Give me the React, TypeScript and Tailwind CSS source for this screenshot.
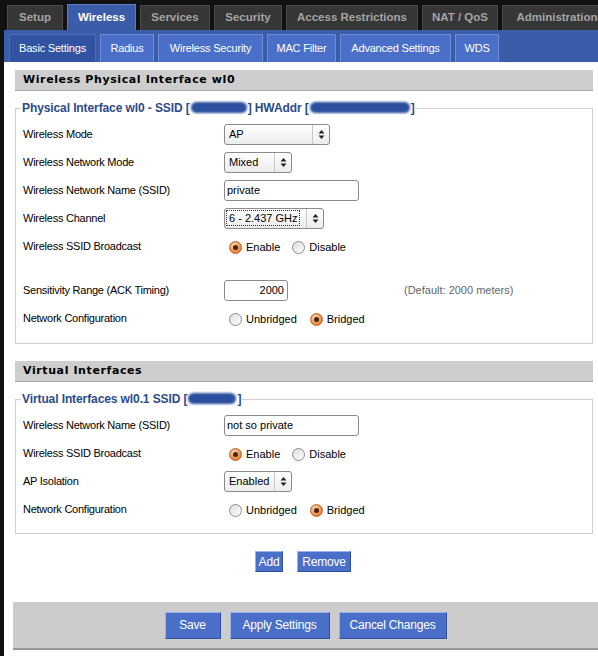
import React from 'react';

const sans = "font-['Liberation_Sans',Arial,sans-serif]";

const topTabs = [
  { label: 'Setup', w: 'w-[56px]' },
  { label: 'Wireless', w: 'w-[69px]', active: true },
  { label: 'Services', w: 'w-[70px]' },
  { label: 'Security', w: 'w-[68px]' },
  { label: 'Access Restrictions', w: 'w-[132px]' },
  { label: 'NAT / QoS', w: 'w-[76px]' },
  { label: 'Administration', w: 'w-[110px]' },
];

const subTabs = [
  { label: 'Basic Settings', w: 'w-[87px]', active: true },
  { label: 'Radius', w: 'w-[54px]' },
  { label: 'Wireless Security', w: 'w-[105px]' },
  { label: 'MAC Filter', w: 'w-[69px]' },
  { label: 'Advanced Settings', w: 'w-[111px]' },
  { label: 'WDS', w: 'w-[44px]' },
];

const Blob = ({ w }: { w: string }) => (
  <span className={`inline-block h-[11px] ${w} rounded-full bg-[#2a4f9e] blur-[1px] align-[-1px] mx-[1px]`} />
);

const Arrows = () => (
  <span className="flex h-full w-[17px] items-center justify-center border-l border-[#c8c8c8]">
    <svg width="7" height="11" viewBox="0 0 7 11">
      <path d="M3.5 1 L6.5 4.5 H0.5 Z" fill="#222" />
      <path d="M3.5 10 L6.5 6.5 H0.5 Z" fill="#222" />
    </svg>
  </span>
);

const Select = ({ value, w, focus }: { value: string; w: string; focus?: boolean }) => (
  <div className={`flex h-[21px] ${w} items-center rounded-[3px] border border-[#8a8a8a] bg-gradient-to-b from-white to-[#ececec] text-[11px] text-black`}>
    <span className="flex flex-1 items-center pl-[2px]">
      <span className={`px-[2px] leading-[14px] ${focus ? 'outline outline-1 outline-dotted outline-[#333]' : ''}`}>{value}</span>
    </span>
    <Arrows />
  </div>
);

const TextInput = ({ value, w, right }: { value: string; w: string; right?: boolean }) => (
  <div className={`flex h-[21px] ${w} items-center rounded-[3px] border border-[#8a8a8a] bg-white px-[2px] text-[11px] text-black ${right ? 'justify-end pr-[3px]' : ''}`}>
    {value}
  </div>
);

const Radio = ({ checked, label }: { checked?: boolean; label: string }) => (
  <span className="flex items-center pt-[3px]">
    {checked ? (
      <span className="flex h-[13px] w-[13px] items-center justify-center rounded-full border border-[#b8642a] bg-[radial-gradient(circle_at_40%_35%,#fde0c4,#f0914a_55%,#d8661f)]">
        <span className="h-[5px] w-[5px] rounded-full bg-[#4a2410]" />
      </span>
    ) : (
      <span className="h-[13px] w-[13px] rounded-full border border-[#8c8c8c] bg-gradient-to-br from-[#dcdcdc] to-white" />
    )}
    <span className="ml-[4px] text-[11px]">{label}</span>
  </span>
);

const Row = ({ label, children }: { label: string; children: React.ReactNode }) => (
  <div className="flex h-[28px] items-center">
    <div className="w-[201px] shrink-0 text-[11px] tracking-[-0.25px] text-black">{label}</div>
    {children}
  </div>
);

const Header = ({ title }: { title: string }) => (
  <div className="ml-[11px] mr-[5px] flex h-[21px] items-center border-b border-[#a8a8a8] bg-[#cecece] pl-[8px] font-['DejaVu_Sans',Verdana,sans-serif] text-[11px] font-bold tracking-[0.6px] text-black">
    {title}
  </div>
);

const Btn = ({ label, w, h }: { label: string; w: string; h: string }) => (
  <button className={`${w} ${h} border border-t-[#9bb2ea] border-l-[#9bb2ea] border-r-[#2f4f99] border-b-[#2f4f99] bg-[#4a6fc8] text-[12px] tracking-[-0.2px] text-white`}>
    {label}
  </button>
);

export default function App() {
  return (
    <div className={`h-[656px] w-[598px] overflow-hidden bg-[#111] ${sans}`}>
      {/* top tabs */}
      <div className="flex h-[30px] items-end gap-[4px] pl-[7px]">
        {topTabs.map((t) => (
          <div
            key={t.label}
            className={`flex shrink-0 items-center justify-center ${t.w} text-[11.5px] font-bold ${
              t.active
                ? 'h-[26px] border-x border-t border-[#5b7cc6] bg-[#3b5ca8] text-white'
                : 'h-[25px] border-x border-t border-[#4a4a4a] bg-[#363636] text-[#a4a4a4]'
            }`}
          >
            {t.label}
          </div>
        ))}
      </div>

      <div className="ml-[4px] h-[626px] bg-white">
        {/* sub tabs */}
        <div className="flex h-[32px] items-end gap-[4px] bg-[#3b5ca8] pl-[5px]">
          {subTabs.map((t) => (
            <div
              key={t.label}
              className={`flex h-[28px] shrink-0 items-center justify-center ${t.w} border-x border-t text-[11px] tracking-[-0.2px] text-white ${
                t.active ? 'border-[#4b6dbd] bg-[#3153a1]' : 'border-[#6e8ed8] bg-[#4a6fc8]'
              }`}
            >
              {t.label}
            </div>
          ))}
        </div>

        <div className="pt-[8px]">
          <Header title="Wireless Physical Interface wl0" />

          <fieldset className="ml-[11px] mr-[5px] mt-[8px] border border-[#cfcfcf] px-[5px] pb-[11px]">
            <legend className="px-[1px] text-[12px] font-bold tracking-[-0.1px] text-[#2c4a8c]">
              Physical Interface wl0 - SSID [<Blob w="w-[56px]" />] HWAddr [<Blob w="w-[100px]" />]
            </legend>
            <div className="pl-[2px] pt-[3px]">
              <Row label="Wireless Mode">
                <Select value="AP" w="w-[106px]" />
              </Row>
              <Row label="Wireless Network Mode">
                <Select value="Mixed" w="w-[68px]" />
              </Row>
              <Row label="Wireless Network Name (SSID)">
                <TextInput value="private" w="w-[135px]" />
              </Row>
              <Row label="Wireless Channel">
                <Select value="6 - 2.437 GHz" w="w-[100px]" focus />
              </Row>
              <Row label="Wireless SSID Broadcast">
                <div className="ml-[5px] flex gap-[12px]">
                  <Radio checked label="Enable" />
                  <Radio label="Disable" />
                </div>
              </Row>
              <div className="h-[16px]" />
              <Row label="Sensitivity Range (ACK Timing)">
                <TextInput value="2000" w="w-[64px]" right />
                <span className="ml-[116px] text-[11px] text-[#666]">(Default: 2000 meters)</span>
              </Row>
              <Row label="Network Configuration">
                <div className="ml-[5px] flex gap-[13px]">
                  <Radio label="Unbridged" />
                  <Radio checked label="Bridged" />
                </div>
              </Row>
            </div>
          </fieldset>

          <div className="h-[17px]" />
          <Header title="Virtual Interfaces" />

          <fieldset className="ml-[11px] mr-[5px] mt-[8px] border border-[#cfcfcf] px-[5px] pb-[10px]">
            <legend className="px-[1px] text-[12px] font-bold tracking-[-0.1px] text-[#2c4a8c]">
              Virtual Interfaces wl0.1 SSID [<Blob w="w-[48px]" />]
            </legend>
            <div className="pl-[2px] pt-[3px]">
              <Row label="Wireless Network Name (SSID)">
                <TextInput value="not so private" w="w-[135px]" />
              </Row>
              <Row label="Wireless SSID Broadcast">
                <div className="ml-[5px] flex gap-[12px]">
                  <Radio checked label="Enable" />
                  <Radio label="Disable" />
                </div>
              </Row>
              <Row label="AP Isolation">
                <Select value="Enabled" w="w-[68px]" />
              </Row>
              <Row label="Network Configuration">
                <div className="ml-[5px] flex gap-[13px]">
                  <Radio label="Unbridged" />
                  <Radio checked label="Bridged" />
                </div>
              </Row>
            </div>
          </fieldset>

          <div className="mt-[17px] flex justify-center gap-[14px] pl-[4px]">
            <Btn label="Add" w="w-[28px]" h="h-[21px]" />
            <Btn label="Remove" w="w-[54px]" h="h-[21px]" />
          </div>

          <div className="ml-[9px] mt-[30px] flex h-[48px] items-center justify-center gap-[9px] border-b-2 border-[#9a9a9a] bg-[#cccccc]">
            <Btn label="Save" w="w-[56px]" h="h-[27px]" />
            <Btn label="Apply Settings" w="w-[100px]" h="h-[27px]" />
            <Btn label="Cancel Changes" w="w-[108px]" h="h-[27px]" />
          </div>
        </div>
      </div>
    </div>
  );
}
